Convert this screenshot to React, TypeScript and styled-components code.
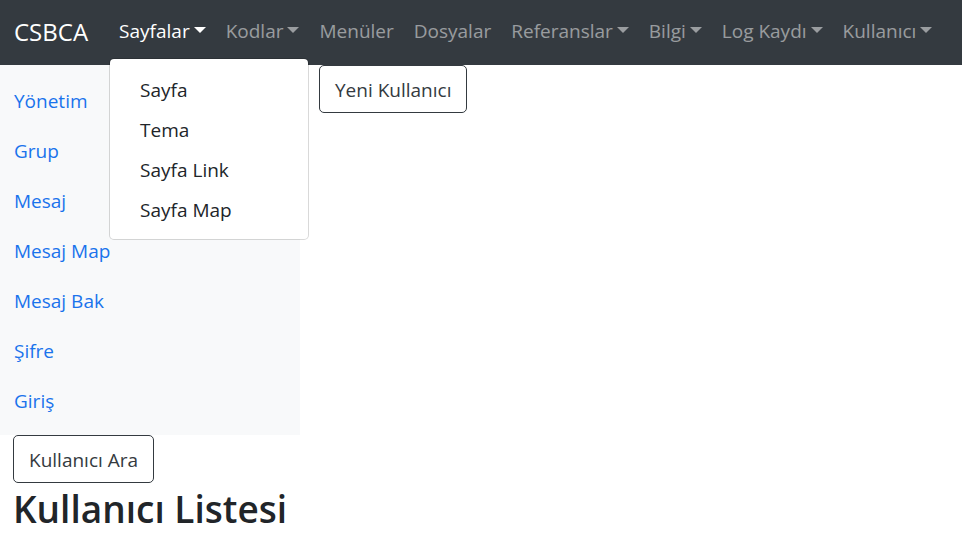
import React, { useState } from "react";
import styled, { createGlobalStyle, css } from "styled-components";

const GlobalStyle = createGlobalStyle`
  *, *::before, *::after { box-sizing: border-box; }
  body {
    margin: 0;
    background: #fff;
    color: #212529;
    font-family: "Segoe UI", "Open Sans", "Noto Sans", sans-serif;
    font-size: 19px;
    line-height: 30px;
  }
`;

const Navbar = styled.header`
  display: flex;
  align-items: center;
  padding: 7px 14px 8px;
  background: #343a40;
`;

const Brand = styled.a`
  margin-right: 21px;
  color: #fff;
  font-size: 24px;
  line-height: 38px;
  text-decoration: none;
`;

const Menu = styled.ul`
  display: flex;
  flex: 1;
  margin: 0;
  padding: 0;
  list-style: none;
`;

const MenuItem = styled.li`
  position: relative;
`;

const menuEntry = css<{ $active?: boolean }>`
  display: flex;
  align-items: center;
  gap: 4px;
  padding: 9px 10px 11px;
  border: 0;
  background: none;
  color: ${({ $active }) => ($active ? "#fff" : "rgba(255, 255, 255, 0.5)")};
  font: inherit;
  text-decoration: none;
  white-space: nowrap;
  cursor: pointer;
`;

const MenuLink = styled.a`
  ${menuEntry}
`;

const MenuToggle = styled.button<{ $active: boolean }>`
  ${menuEntry}

  &::after {
    content: "";
    margin-bottom: 2px;
    border: 6px solid transparent;
    border-top-color: currentColor;
    border-bottom: 0;
  }
`;

const Dropdown = styled.ul`
  position: absolute;
  top: calc(100% + 1px);
  left: 0;
  z-index: 10;
  min-width: 200px;
  margin: 0;
  padding: 11px 0 9px;
  border: 1px solid rgba(0, 0, 0, 0.15);
  border-radius: 5px;
  background: #fff;
  background-clip: padding-box;
  list-style: none;
`;

const DropdownLink = styled.a`
  display: block;
  padding: 5px 30px;
  color: #212529;
  text-decoration: none;
  white-space: nowrap;
`;

const Columns = styled.div`
  display: flex;
  align-items: flex-start;
  gap: 19px;
`;

const Sidebar = styled.nav`
  display: flex;
  flex: 0 0 300px;
  flex-direction: column;
  padding: 11px 0 9px;
  background: #f8f9fa;
`;

const SidebarLink = styled.a`
  padding: 10px 14px;
  color: #1a73ec;
  text-decoration: none;
`;

const OutlineButton = styled.button`
  padding: 9px 15px 7px;
  border: 1px solid #343a40;
  border-radius: 5px;
  background: transparent;
  color: #343a40;
  font: inherit;
  cursor: pointer;
`;

const ListSection = styled.section`
  padding: 0 13px;
`;

const Heading = styled.h1`
  margin: 0;
  font-size: 37px;
  font-weight: 600;
  line-height: 52px;
`;

interface Entry {
  label: string;
  items?: string[];
}

const menu: Entry[] = [
  { label: "Sayfalar", items: ["Sayfa", "Tema", "Sayfa Link", "Sayfa Map"] },
  { label: "Kodlar", items: [] },
  { label: "Menüler" },
  { label: "Dosyalar" },
  { label: "Referanslar", items: [] },
  { label: "Bilgi", items: [] },
  { label: "Log Kaydı", items: [] },
  { label: "Kullanıcı", items: [] },
];

const sidebar = ["Yönetim", "Grup", "Mesaj", "Mesaj Map", "Mesaj Bak", "Şifre", "Giriş"];

export default function App() {
  const [open, setOpen] = useState<string | null>("Sayfalar");

  return (
    <>
      <GlobalStyle />
      <Navbar>
        <Brand href="#">CSBCA</Brand>
        <nav>
          <Menu>
            {menu.map(({ label, items }) => (
              <MenuItem key={label}>
                {items ? (
                  <MenuToggle
                    type="button"
                    aria-haspopup="true"
                    aria-expanded={open === label}
                    $active={open === label}
                    onClick={() => setOpen(open === label ? null : label)}
                  >
                    {label}
                  </MenuToggle>
                ) : (
                  <MenuLink href="#">{label}</MenuLink>
                )}
                {open === label && items && items.length > 0 && (
                  <Dropdown>
                    {items.map((item) => (
                      <li key={item}>
                        <DropdownLink href="#">{item}</DropdownLink>
                      </li>
                    ))}
                  </Dropdown>
                )}
              </MenuItem>
            ))}
          </Menu>
        </nav>
      </Navbar>
      <main>
        <Columns>
          <Sidebar>
            {sidebar.map((label) => (
              <SidebarLink key={label} href="#">
                {label}
              </SidebarLink>
            ))}
          </Sidebar>
          <OutlineButton type="button">Yeni Kullanıcı</OutlineButton>
        </Columns>
        <ListSection>
          <OutlineButton type="button">Kullanıcı Ara</OutlineButton>
          <Heading>Kullanıcı Listesi</Heading>
        </ListSection>
      </main>
    </>
  );
}
